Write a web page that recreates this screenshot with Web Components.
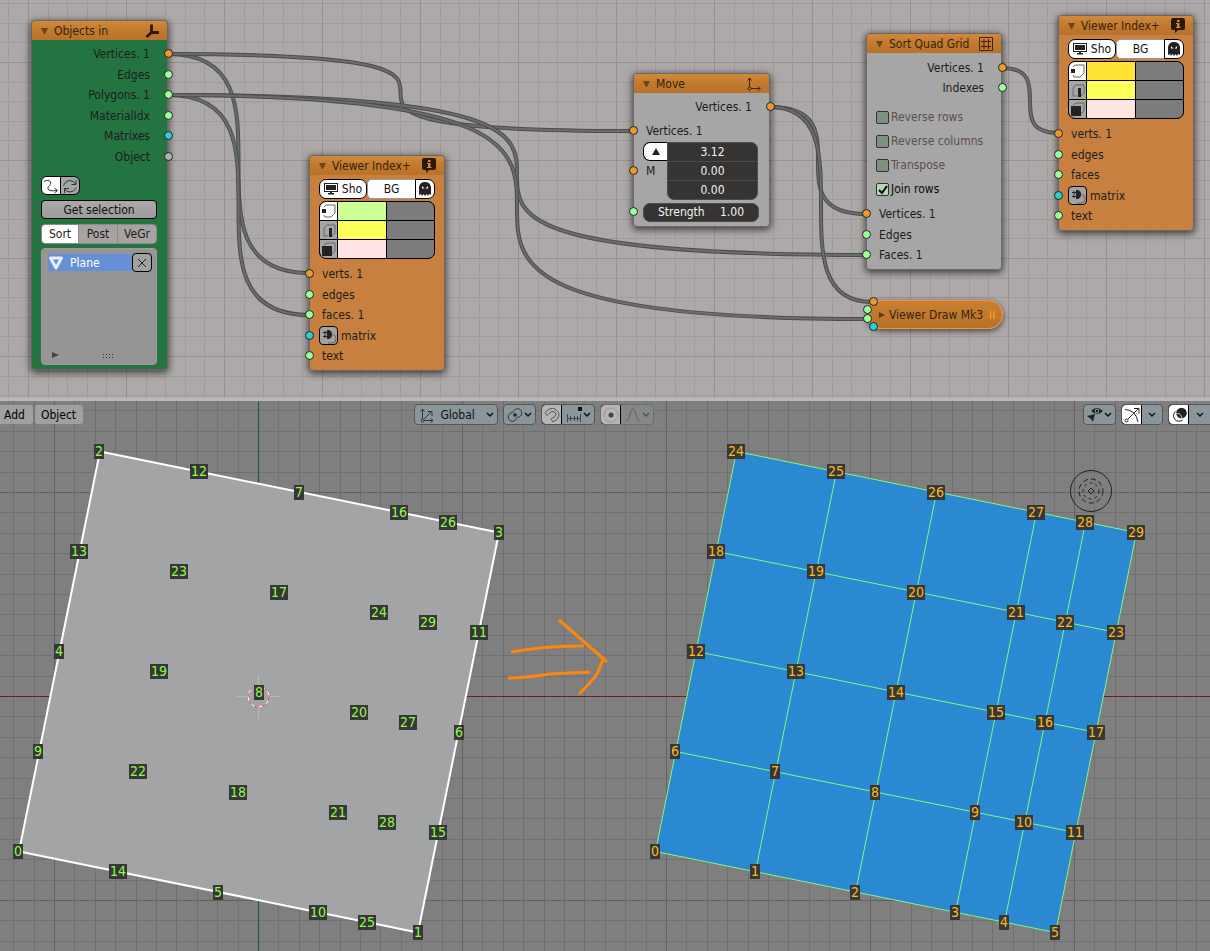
<!DOCTYPE html>
<html lang="en">
<head>
<meta charset="utf-8">
<title>Sverchok – Sort Quad Grid</title>
<style>
  html, body { height: 100%; }
  body { margin: 0; font: 12px/16px "DejaVu Sans Condensed", "DejaVu Sans", sans-serif; color: #1c1c1c; background: #b9b9b9; }
</style>
</head>
<body>
<app-workspace></app-workspace>

<script>
const RESET = `
  * { box-sizing: border-box; }
  button, input, select { font: inherit; color: inherit; margin: 0; padding: 0; border: 0; background: none; border-radius: 0; appearance: none; outline: none; }
  svg { display: block; flex: none; }
`;

function define(name, css, html, setup) {
  const template = document.createElement('template');
  template.innerHTML = `<style>${RESET}${css}</style>${html}`;
  customElements.define(name, class extends HTMLElement {
    connectedCallback() {
      if (this.shadowRoot) return;
      const root = this.attachShadow({ mode: 'open' });
      root.append(template.content.cloneNode(true));
      if (setup) setup(root, this);
    }
  });
}

/* ---------- icons ---------- */
const ICONS = {
  axis: [16, 16, `<path d="M8.500 1.500V9.500H16M8.500 9.500L3.500 14" fill="none" stroke="#2a1808" stroke-width="2.800"/>`],
  info: [14, 15, `<path d="M2 0h10q2 0 2 2v8q0 2-2 2H7l-3 3v-3H2q-2 0-2-2V2q0-2 2-2z" fill="#2a1808"/><path d="M6 2h2.500v2H6zM5 5h3.500v4h1v1H5V9h1V6H5z" fill="#d08a3c"/>`],
  move: [14, 14, `<path d="M2.500 10V1M.5 3.500L2.500 1l2 2.500M4 11.500h9M11 9.500l2 2-2 2" fill="none" stroke="#3a240c"/><circle cx="2.500" cy="11.500" r="1.500" fill="none" stroke="#3a240c"/>`],
  quad: [14, 14, `<path d="M.5.5h13v13H.5zM5 2v10M9.500 2v10M2 4.500h10M2 9.500h10" fill="none" stroke="#3a240c"/>`],
  curve: [16, 16, `<path d="M1 3.500Q6 1 7.500 4C9 7 4 8 5 11q1 2.500 9 1.500M11.500 10l3 2.500-3 2.500" fill="none" stroke="#333"/>`],
  refresh: [16, 16, `<path d="M1.500 7.500Q3 3 7.500 2.500 11 2.500 14 6M14 2v4.500H9.500M14.500 9.500Q12 14 8 14 5 14 2.500 11M2.500 15v-4.500H7" fill="none" stroke="#333"/>`],
  cross: [10, 10, `<path d="M1 1l8 8M9 1L1 9" stroke="#222" fill="none"/>`],
  mesh: [14, 14, `<path d="M1.500 2h11L7 12z" fill="none" stroke="#e8f0fc" stroke-width="3" stroke-linejoin="round"/>`],
  screen: [14, 12, `<rect x=".5" y=".5" width="13" height="8" fill="none" stroke="#222"/><rect x="2" y="2" width="10" height="5" fill="#222"/><path d="M6 9h2v1h2v1.500H4V10h2z" fill="#222"/>`],
  ghost: [12, 14, `<path d="M0 13V5q1-5 6-5t6 5v8l-2-1-1 2-1.500-2L6 14l-1.500-2L3 14l-1-2z" fill="#222"/><path d="M3 4l2.500 2.500H3zM9 4L6.500 6.500H9z" fill="#fff"/>`],
  vert: [16, 16, `<path d="M3 4l2-2h9v8l-4 4H4l-1-2" fill="none" stroke="#666"/><rect x="1" y="6" width="4" height="4" fill="#222"/>`],
  edge: [16, 16, `<path d="M7 14H3V6l3-3h8v8l-3 3" fill="none" stroke="#666"/><rect x="8" y="6" width="3" height="9" fill="#222"/>`],
  face: [16, 16, `<path d="M3 4l3-2h8v8l-3 3" fill="none" stroke="#666"/><rect x="1" y="5" width="10" height="10" fill="#222"/>`],
  plug: [16, 16, `<path d="M6 2v9h2q3-1 3-4.500T8 2z" fill="#222"/><path d="M2 4.500h4M2 8.500h4M4 3v7" stroke="#222" fill="none"/><path d="M11 6q4 1 4 5t-4 4H7" fill="none" stroke="#666"/>`],
  up: [8, 7, `<path d="M0 7L4 0l4 7z" fill="#222"/>`],
  chev: [8, 6, `<path d="M1 1l3 3 3-3" fill="none" stroke="#111" stroke-width="1.500"/>`],
  orient: [16, 16, `<path d="M3.500 12V2M1.500 4.500l2-2.500 2 2.500M5 13.500h9M11.500 11.500l2.500 2-2.500 2M5 12l7-7M8.500 4.500H13V9" fill="none" stroke="#333"/><circle cx="3.500" cy="13.500" r="1.500" fill="none" stroke="#333"/>`],
  pivot: [16, 16, `<circle cx="5.500" cy="10" r="4.300" fill="none" stroke="#333"/><circle cx="10.500" cy="6" r="4.300" fill="none" stroke="#333"/><circle cx="8" cy="8" r="3" fill="#8a969c"/><circle cx="8" cy="8" r="1.800" fill="#222"/>`],
  magnet: [16, 16, `<path d="M3 8.500L1 5.500Q6 0 11 2q5 3 4 7-1 4-6 6l-2-3q5-2 5-5-1-3-4-2.500Q6 5 3 8.500z" fill="none" stroke="#555"/>`],
  snap: [16, 16, `<path d="M1.500 7v8M14.500 7v8M1 11.500h13M4.500 9v5M8.500 9v5M11.500 9v5" fill="none" stroke="#444"/><rect x="12" y="0" width="4" height="4" fill="#111"/>`],
  prop: [16, 16, `<circle cx="8" cy="8" r="7" fill="none" stroke="#999"/><circle cx="8" cy="8" r="2.500" fill="#444"/>`],
  fall: [16, 16, `<path d="M1 14c5 0 3-12 7-12s2 12 7 12" fill="none" stroke="#333"/>`],
  eye: [16, 16, `<path d="M4 4q5.500-6 12 0-5.500 6-12 0z" fill="#222"/><circle cx="10" cy="4" r="2.200" fill="#8b979e"/><circle cx="10" cy="4" r="1.200" fill="#111"/><path d="M0 9l8-2-2 8-2-3z" fill="#222"/>`],
  gizmo: [16, 16, `<path d="M1 2.500Q12 3 14 15M4 12L14 2M10 1.500h5v5" fill="none" stroke="#222"/><circle cx="2.500" cy="13.500" r="1.500" fill="none" stroke="#222"/>`],
  overlay: [16, 16, `<circle cx="10.500" cy="6" r="5.300" fill="#222"/><path d="M4.500 4.500a5.300 5.300 0 1 0 7 8.500" fill="none" stroke="#222"/><path d="M5 6.500q5-1 6 5" fill="none" stroke="#bbb"/>`],
};
customElements.define('ui-icon', class extends HTMLElement {
  connectedCallback() {
    if (this.shadowRoot) return;
    const [w, h, body] = ICONS[this.getAttribute('name')];
    this.attachShadow({ mode: 'open' }).innerHTML =
      `<style>:host{display:block;flex:none;pointer-events:none}svg{display:block}</style><svg width="${w}" height="${h}" viewBox="0 0 ${w} ${h}" aria-hidden="true">${body}</svg>`;
  }
});

/* ---------- node parts ---------- */
define('sv-socket', `
  :host { position: relative; display: flex; align-items: center; height: 20px; padding-left: var(--pad, 13px); }
  :host(:nth-of-type(even)) { height: 21px; }
  :host([side=out]) { justify-content: flex-end; padding: 0 18px 0 0; }
  :host([field]) { padding: 0 11px 0 10px; }
  i { position: absolute; left: -4px; top: 50%; width: 9px; height: 9px; margin-top: -5px; border: 1px solid #222; border-radius: 50%; background: var(--dot); }
  :host([side=out]) i { left: auto; right: -5px; }
  :host([dot=orange]) { --dot: #ea9a31; }
  :host([dot=green]) { --dot: #9cff9c; }
  :host([dot=cyan]) { --dot: #2ecbd0; }
  :host([dot=grey]) { --dot: #a9b5b2; }
`, `<slot></slot><i></i>`);

define('sv-node', `
  :host { display: block; width: var(--w, 136px); border-radius: 4px; border: 1px solid rgba(40,40,40,.5); background: var(--body, rgba(166,166,166,.94)); background-clip: padding-box; box-shadow: 0 2px 7px 1px rgba(0,0,0,.6); padding-bottom: 4px; }
  header { display: flex; align-items: center; gap: 6px; height: 19px; padding: 0 8px 0 9px; border-radius: 3px 3px 0 0; background: linear-gradient(#d2893c, #c17a2e 50%, #b87127); color: #33230f; }
  header svg { fill: #6d4617; }
  h2 { flex: 1; margin: 0; font: inherit; white-space: nowrap; }
  main { display: block; margin: 0 -1px; }
`, `<header><svg width="7" height="6"><path d="M0 0h7L4 6H3z"/></svg><h2></h2><slot name="icon"></slot></header><main><slot></slot></main>`,
(root, host) => { root.querySelector('h2').textContent = host.getAttribute('heading'); });

define('objects-in', `
  :host { display: block; }
  sv-node { --w: 137px; --body: rgba(31,115,62,.97); }
  .outs { padding-top: 4px; }
  .body { display: flex; flex-direction: column; margin-top: 9px; padding: 0 11px 0 10px; }
  .pair { display: flex; align-self: flex-start; height: 19px; border: 1px solid #000; border-radius: 6px; overflow: hidden; background: #a6a6a6; }
  .pair button { display: grid; place-items: center; width: 18px; height: 17px; }
  .pair button:first-child { background: #fff; border-right: 1px solid #000; width: 19px; }
  .get { height: 19px; margin-top: 5px; border: 1px solid #000; border-radius: 4px; background: linear-gradient(#aaa, #9c9c9c); line-height: 16px; color: #0c0c0c; }
  .tabs { display: grid; grid-template-columns: 36px 39px 1fr; height: 20px; margin-top: 5px; border: 1px solid #8d8b8a; border-radius: 4px; overflow: hidden; }
  .tabs button { background: #a8a3a2; border-left: 1px solid #8d8b8a; }
  .tabs button:first-child { background: #fff; border: 0; }
  .list { display: flex; flex-direction: column; justify-content: space-between; height: 117px; margin-top: 4px; padding: 4px 4px 6px 6px; border-radius: 4px; border: 1px solid #9f9d9c; background: #979593; }
  .item { display: flex; align-items: center; height: 19px; }
  .name { display: flex; align-items: center; gap: 7px; flex: 1; height: 17px; padding-left: 1px; border-radius: 3px 0 0 3px; background: #658fd6; color: #fff; }
  .x { display: grid; place-items: center; width: 20px; height: 19px; border: 1px solid #000; border-radius: 4px; background: #a1a1a1; }
  .foot { display: flex; align-items: center; gap: 43px; padding-left: 4px; }
`, `<sv-node heading="Objects in"><ui-icon slot="icon" name="axis"></ui-icon>
  <div class="outs">
    <sv-socket side="out" dot="orange">Vertices. 1</sv-socket><sv-socket side="out" dot="green">Edges</sv-socket>
    <sv-socket side="out" dot="green">Polygons. 1</sv-socket><sv-socket side="out" dot="green">MaterialIdx</sv-socket>
    <sv-socket side="out" dot="cyan">Matrixes</sv-socket><sv-socket side="out" dot="grey">Object</sv-socket>
  </div>
  <div class="body">
    <div class="pair"><button aria-label="Live update"><ui-icon name="curve"></ui-icon></button><button aria-label="Refresh"><ui-icon name="refresh"></ui-icon></button></div>
    <button class="get">Get selection</button>
    <div class="tabs"><button>Sort</button><button>Post</button><button>VeGr</button></div>
    <div class="list">
      <div class="item"><div class="name"><ui-icon name="mesh"></ui-icon>Plane</div><button class="x" aria-label="Remove"><ui-icon name="cross"></ui-icon></button></div>
      <div class="foot"><svg width="7" height="6"><path d="M0 0l7 3-7 3z" fill="#444"/></svg>
      <svg width="12" height="5"><path d="M1 1.500h11M1 4.500h11" stroke="#333" stroke-dasharray="1 2"/></svg></div>
    </div>
  </div></sv-node>`);

define('viewer-index', `
  :host { display: block; }
  sv-node { --body: rgba(200,127,61,.97); }
  .top { display: flex; height: 20px; margin-top: 4px; padding: 0 10px; }
  .top button { display: flex; align-items: center; justify-content: center; background: #fff; border: 1px solid #000; color: #111; }
  .sho { gap: 4px; width: 48px; border-radius: 7px; }
  .bg { flex: 1; border-color: #999 !important; border-right: 0 !important; border-radius: 5px 0 0 5px; }
  .ghost { width: 20px; border-radius: 0 7px 7px 0; }
  .swatches { display: grid; grid-template: repeat(3, 1fr) / 17px 1fr 1fr; gap: 1px; height: 58px; margin: 2px 10px 5px; border: 1px solid #000; border-radius: 7px; overflow: hidden; background: #000; }
  .swatches button { display: grid; place-items: center; background: #a6a6a6; overflow: hidden; }
  .swatches button:first-child { background: #fff; }
  .swatches input { width: 100%; min-width: 0; height: 100%; background: #7c7c7c; }
  .swatches .a { background: var(--c1); } .swatches .b { background: #ffff5a; } .swatches .c { background: #ffe6e4; }
  .plug { display: grid; place-items: center; width: 19px; height: 19px; margin: 0 3px 0 -3px; border: 1px solid #000; border-radius: 4px; background: #a3a3a3; }
`, `<sv-node heading="Viewer Index+"><ui-icon slot="icon" name="info"></ui-icon>
  <div class="top"><button class="sho"><ui-icon name="screen"></ui-icon>Sho</button><button class="bg">BG</button><button class="ghost" aria-label="Ghost"><ui-icon name="ghost"></ui-icon></button></div>
  <div class="swatches">
    <button aria-label="Vertices"><ui-icon name="vert"></ui-icon></button><input class="a" readonly aria-label="Vertex text"><input readonly aria-label="Vertex background">
    <button aria-label="Edges"><ui-icon name="edge"></ui-icon></button><input class="b" readonly aria-label="Edge text"><input readonly aria-label="Edge background">
    <button aria-label="Faces"><ui-icon name="face"></ui-icon></button><input class="c" readonly aria-label="Face text"><input readonly aria-label="Face background">
  </div>
  <div><sv-socket dot="orange">verts. 1</sv-socket><sv-socket dot="green">edges</sv-socket><sv-socket dot="green"><span id="f"></span></sv-socket>
  <sv-socket dot="cyan"><button class="plug" aria-label="Plug"><ui-icon name="plug"></ui-icon></button>matrix</sv-socket><sv-socket dot="green">text</sv-socket></div>
</sv-node>`, (root, host) => { root.getElementById('f').textContent = host.getAttribute('faces'); });

define('move-node', `
  :host { display: block; }
  sv-node { --w: 137px; }
  .out { padding-top: 4px; }
  .in { padding-top: 4px; }
  .vec { display: grid; grid-template-columns: 24px 1fr; margin: 1px 12px 2px 10px; height: 58px; }
  .side sv-socket { margin-left: -10px; }
  .up { display: grid; place-items: center; width: 24px; height: 19px; background: #fff; border: 1px solid #000; border-right: 0; border-radius: 7px 0 0 7px; }
  .nums { display: grid; grid-template-rows: repeat(3, 1fr); gap: 1px; border-radius: 0 7px 7px 7px; overflow: hidden; background: #4c4b4a; border: 1px solid #4c4b4a; }
  .nums input { width: 100%; min-width: 0; background: #353433; color: #f2f2f2; text-align: center; }
  .str { display: flex; align-items: center; flex: 1; height: 19px; padding: 0 14px; border-radius: 7px; border: 1px solid #4c4b4a; background: #353433; color: #f2f2f2; }
  .str label { flex: 1; }
  .str input { width: 34px; text-align: right; }
`, `<sv-node heading="Move"><ui-icon slot="icon" name="move"></ui-icon>
  <div class="out"><sv-socket side="out" dot="orange">Vertices. 1</sv-socket></div>
  <div class="in"><sv-socket dot="orange">Vertices. 1</sv-socket></div>
  <div class="vec"><div class="side"><button class="up" aria-label="Collapse"><ui-icon name="up"></ui-icon></button><sv-socket dot="orange">M</sv-socket></div>
  <div class="nums"><input value="3.12" aria-label="M X"><input value="0.00" aria-label="M Y"><input value="0.00" aria-label="M Z"></div></div>
  <div><sv-socket field dot="green"><div class="str"><label for="s">Strength</label><input id="s" value="1.00"></div></sv-socket></div>
</sv-node>`);

define('sort-node', `
  :host { display: block; }
  .out { padding-top: 5px; }
  .out sv-socket { height: 20px; }
  .checks { padding: 7px 10px 3px; color: #5c4e4a; }
  label { display: flex; align-items: center; gap: 2px; height: 24px; white-space: nowrap; }
  input { flex: none; width: 13px; height: 13px; border: 1px solid #2c332e; border-radius: 2px; background: #7b917d; }
  input:checked { background: #b3d9b3 url("data:image/svg+xml,%3Csvg xmlns='http://www.w3.org/2000/svg' width='11' height='11'%3E%3Cpath d='M2 6l3 3 5-7' fill='none' stroke='%23000' stroke-width='2'/%3E%3C/svg%3E"); }
  label:has(:checked) { color: #0a0a0a; }
`, `<sv-node heading="Sort Quad Grid"><ui-icon slot="icon" name="quad"></ui-icon>
  <div class="out"><sv-socket side="out" dot="orange">Vertices. 1</sv-socket><sv-socket side="out" dot="green">Indexes</sv-socket></div>
  <div class="checks"><label><input type="checkbox">Reverse rows</label><label><input type="checkbox">Reverse columns</label><label><input type="checkbox">Transpose</label><label><input type="checkbox" checked>Join rows</label></div>
  <div><sv-socket dot="orange">Vertices. 1</sv-socket><sv-socket dot="green">Edges</sv-socket><sv-socket dot="green">Faces. 1</sv-socket></div>
</sv-node>`);

define('collapsed-node', `
  :host { position: relative; display: flex; align-items: center; gap: 4px; width: 136px; height: 29px; padding: 0 7px 0 11px; border: 1px solid #f09338; border-radius: 15px; background: linear-gradient(#c98033, #b87127); box-shadow: 0 2px 6px rgba(0,0,0,.6); color: #33230f; white-space: nowrap; }
  h2 { margin: 0; font: inherit; flex: 1; }
  i { position: absolute; width: 9px; height: 9px; border: 1px solid #222; border-radius: 50%; background: #9cff9c; }
  .a { left: 1px; top: -4px; background: #ea9a31; } .b { left: -5px; top: 4px; } .c { left: -5px; top: 13px; } .d { left: 1px; top: 21px; background: #2ecbd0; }
`, `<svg width="6" height="6"><path d="M0 0l6 3-6 3z" fill="#5d3b12"/></svg><h2>Viewer Draw Mk3</h2><svg width="5" height="8"><path d="M.5 0v8M4 0v8" stroke="#ff981c" stroke-width="1.500"/></svg>
  <i class="a"></i><i class="b"></i><i class="c"></i><i class="d"></i>`);

/* ---------- node editor ---------- */
const LINKS = [[168,54,309,273],[168,95,309,315],[168,54,633,131],[168,95,866,255],[168,95,866,319],[770,107,866,214],[770,107,872,302],[1002,68,1058,133]];
define('node-editor', `
  :host { position: relative; display: block; overflow: hidden; background: #ada9a8; }
  .bg { position: absolute; inset: 0; width: 100%; height: 100%; }
  .edge { stroke: #4b4d4a; stroke-width: 4; fill: none; } .core { stroke: #6b6d6a; stroke-width: 2; fill: none; }
  .node { position: absolute; }
  objects-in { left: 31px; top: 20px; }
  .v1 { left: 309px; top: 155px; --c1: #ccff94; }
  .v2 { left: 1058px; top: 15px; --c1: #ffe433; }
  move-node { left: 633px; top: 73px; }
  sort-node { left: 866px; top: 33px; }
  collapsed-node.node { left: 867px; top: 300px; }
`, `<svg class="bg" aria-hidden="true"><defs><pattern id="g" x="28" y="62" width="98" height="98" patternUnits="userSpaceOnUse">
    <path d="M20.500 0v98M39.500 0v98M59.500 0v98M78.500 0v98M0 20.500h98M0 39.500h98M0 59.500h98M0 78.500h98" stroke="#a09c9b"/><path d="M.5 0v98M0 .5h98" stroke="#969291"/></pattern></defs>
    <rect width="100%" height="100%" fill="url(#g)"/><g id="links"></g></svg>
  <objects-in class="node"></objects-in><viewer-index class="node v1" faces="faces. 1"></viewer-index><move-node class="node"></move-node>
  <sort-node class="node"></sort-node><collapsed-node class="node"></collapsed-node><viewer-index class="node v2" faces="faces"></viewer-index>`,
root => {
  root.getElementById('links').innerHTML = LINKS.map(([a, b, c, d]) => {
    const p = `M${a} ${b}C${c} ${b} ${a} ${d} ${c} ${d}`;
    return `<path class="edge" d="${p}"/><path class="core" d="${p}"/>`;
  }).join('');
});

/* ---------- 3D viewport ---------- */
define('view-toolbar', `
  :host { position: relative; display: grid; grid-template-columns: 34% auto 1fr; height: 27px; padding-top: 3px; color: #111; }
  div { display: flex; align-items: flex-start; }
  .menus { gap: 2px; padding-top: 1px; }
  .menus button { height: 19px; padding: 0 7px 0 6px; border-radius: 3px; background: #a0a0a0; color: #000; }
  .menus button:first-child { padding: 0 8px 0 4px; border-radius: 0 3px 3px 0; }
  .mid { gap: 5px; padding-left: 3px; }
  .end { gap: 5px; justify-content: flex-end; }
  .box { display: flex; align-items: center; justify-content: space-between; height: 21px; border: 1px solid #55585b; border-radius: 4px; background: #8a969c; overflow: hidden; }
  .box > * { height: 19px; }
  .box button { display: flex; align-items: center; justify-content: center; gap: 1px; flex: 1; }
  .w33 { width: 33px; } .w54 { width: 54px; } .w42 { width: 42px; }
  .box .tog { flex: none; width: 21px; background: #b9b5b4; border: 1px solid #000; border-radius: 5px 0 0 5px; height: 21px; margin-left: -1px; }
  .box .on { background: #fff; }
  .sel { position: relative; width: 84px; padding: 0 3px 0 4px; }
  .sel > ui-icon { height: auto; }
  select { width: 48px; flex: 1; padding-left: 5px; }
  .dim { background: #858889; border-color: #6b6d6e; }
  .dim button:last-child ui-icon { opacity: .45; }
  .tail { border-right: 0; border-radius: 4px 0 0 4px; }
`, `<div class="menus"><button>Add</button><button>Object</button></div>
  <div class="mid">
    <div class="box sel"><ui-icon name="orient"></ui-icon><select aria-label="Transform orientation"><option>Global</option></select><ui-icon name="chev"></ui-icon></div>
    <div class="box w33"><button aria-label="Pivot point"><ui-icon name="pivot"></ui-icon><ui-icon name="chev"></ui-icon></button></div>
    <div class="box w54"><button class="tog" aria-label="Snap"><ui-icon name="magnet"></ui-icon></button><button aria-label="Snap to"><ui-icon name="snap"></ui-icon><ui-icon name="chev"></ui-icon></button></div>
    <div class="box w54 dim"><button class="tog" aria-label="Proportional editing"><ui-icon name="prop"></ui-icon></button><button aria-label="Falloff"><ui-icon name="fall"></ui-icon><ui-icon name="chev"></ui-icon></button></div>
  </div>
  <div class="end">
    <div class="box w33"><button aria-label="Visibility"><ui-icon name="eye"></ui-icon><ui-icon name="chev"></ui-icon></button></div>
    <div class="box w42"><button class="tog on" aria-label="Gizmos"><ui-icon name="gizmo"></ui-icon></button><button aria-label="Gizmo options"><ui-icon name="chev"></ui-icon></button></div>
    <div class="box w42 tail"><button class="tog on" aria-label="Overlays"><ui-icon name="overlay"></ui-icon></button><button aria-label="Overlay options"><ui-icon name="chev"></ui-icon></button></div>
  </div>`);

define('vertex-tag', `
  :host { position: absolute; padding: 0 1px; margin-top: -7px; background: #373737; font-size: 14px; line-height: 15px; color: #8ffc48; transform: translateX(-50%); }
  :host([kind=out]) { color: #fcbb18; }
`, `<slot></slot>`);

const COLS = [0, 100, 200, 300, 349, 400];
const MESHES = [
  { x: 18, y: 450, kind: 'in', rows: ['0 14 5 10 25 1', '9 22 18 21 28 15', '4 19 8 20 27 6', '13 23 17 24 29 11', '2 12 7 16 26 3'] },
  { x: 655, y: 450, kind: 'out', rows: ['0 1 2 3 4 5', '6 7 8 9 10 11', '12 13 14 15 16 17', '18 19 20 21 22 23', '24 25 26 27 28 29'] },
];
const at = (m, c, r) => [Math.round(m.x + COLS[c] + r * 20.25), Math.round(m.y + COLS[c] * .2025 - r * 100)];

define('view-3d', `
  :host { position: relative; display: block; overflow: hidden; background: #7f7f7f; }
  .bg { position: absolute; inset: 0; width: 100%; height: 100%; }
`, `<svg class="bg" aria-hidden="true"><defs><pattern id="g" x="258" y="91" width="204" height="204" patternUnits="userSpaceOnUse">
    <path d="M20.500 0v204M41.500 0v204M61.500 0v204M82.500 0v204M102.500 0v204M122.500 0v204M143.500 0v204M163.500 0v204M184.500 0v204M0 20.500h204M0 41.500h204M0 61.500h204M0 82.500h204M0 102.500h204M0 122.500h204M0 143.500h204M0 163.500h204M0 184.500h204" stroke="#707070"/>
    <path d="M.5 0v204M0 .5h204" stroke="#626262"/></pattern></defs>
    <rect width="100%" height="100%" fill="url(#g)"/>
    <path d="M258.500 0v1000" stroke="#1f5a2b"/><path d="M0 295.500h4000" stroke="#701d24"/>
    <path d="M19 450.500L100 50.500 499 131.500 418 531.500z" fill="#a3a4a5" stroke="#fff" stroke-width="2"/>
    <g id="quads"></g>
    <path d="M237 295.500h12M268 295.500h12M258.500 274v12M258.500 306v12" stroke="#b9b9b9"/>
    <circle cx="258.500" cy="295.500" r="10.500" fill="none" stroke="#fff"/><circle cx="258.500" cy="295.500" r="10.500" fill="none" stroke="#f02828" stroke-dasharray="4"/>
    <g transform="translate(1091 90)" fill="none" stroke="#222"><circle r="20.500"/><circle r="12" stroke-dasharray="5 3"/><circle r="8" stroke-dasharray="3 3"/><path d="M0-3l3 3-3 3-3-3z"/></g>
    <g fill="none" stroke="#ff860d" stroke-width="3"><path d="M511 251Q550 244 584 245"/><path d="M508 277Q525 277 550 273L590 271"/><path d="M559 219L582 239 607 261"/><path d="M604 256L597 273Q594 278 579 293"/></g>
  </svg><view-toolbar></view-toolbar><div id="tags"></div>`,
root => {
  const m = MESHES[1], pt = (c, r) => at(m, c, r).map(v => v + .5).join(' ');
  root.getElementById('quads').innerHTML =
    `<path d="M${pt(0,0)}L${pt(5,0)} ${pt(5,4)} ${pt(0,4)}z" fill="#2a89d0"/><path d="` +
    COLS.map((_, c) => `M${pt(c,0)}L${pt(c,4)}`).join('') + [0,1,2,3,4].map(r => `M${pt(0,r)}L${pt(5,r)}`).join('') +
    `" stroke="#80f880" fill="none"/>`;
  const tags = root.getElementById('tags');
  for (const mesh of MESHES) mesh.rows.forEach((row, r) => row.split(' ').forEach((n, c) => {
    const [x, y] = at(mesh, c, r), tag = document.createElement('vertex-tag');
    tag.setAttribute('kind', mesh.kind); tag.textContent = n;
    tag.style.left = x + 'px'; tag.style.top = y + 'px';
    tags.append(tag);
  }));
});

define('app-workspace', `
  :host { display: grid; grid-template-rows: 398fr 3px 550fr; min-height: 100%; height: 100vh; background: #b9b9b9; }
`, `<node-editor></node-editor><span></span><view-3d></view-3d>`);
</script>
</body>
</html>
